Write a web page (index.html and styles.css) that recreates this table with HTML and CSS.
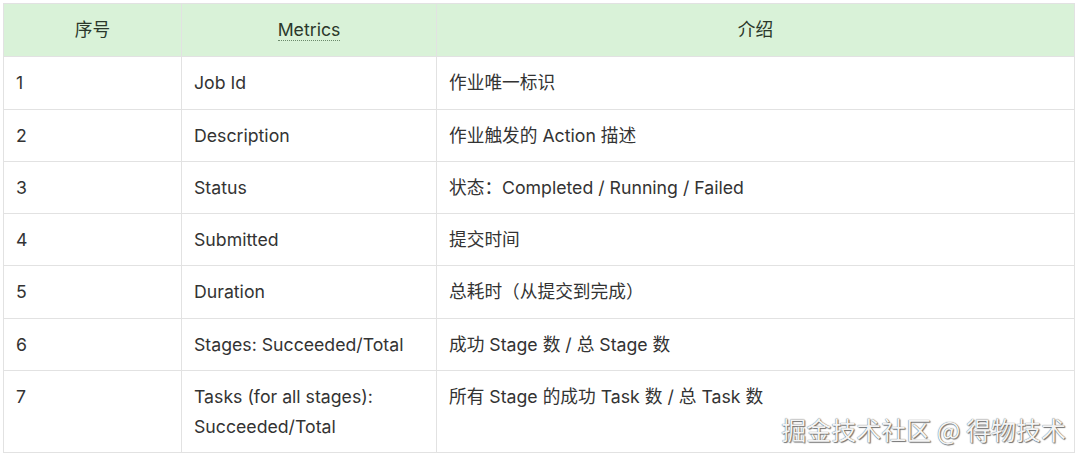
FILE: index.html
```html
<!DOCTYPE html>
<html lang="zh-CN">
<head>
<meta charset="utf-8">
<title>Job Metrics</title>
<link rel="stylesheet" href="styles.css">
</head>
<body>
<div class="wrap">
  <table class="metrics">
    <colgroup>
      <col class="c1"><col class="c2"><col class="c3">
    </colgroup>
    <thead>
      <tr><th>序号</th><th><span class="abbr">Metrics</span></th><th>介绍</th></tr>
    </thead>
    <tbody>
      <tr><td>1</td><td>Job Id</td><td>作业唯一标识</td></tr>
      <tr><td>2</td><td>Description</td><td>作业触发的 Action 描述</td></tr>
      <tr><td>3</td><td>Status</td><td>状态：Completed / Running / Failed</td></tr>
      <tr><td>4</td><td>Submitted</td><td>提交时间</td></tr>
      <tr><td>5</td><td>Duration</td><td>总耗时（从提交到完成）</td></tr>
      <tr><td>6</td><td>Stages: Succeeded/Total</td><td>成功 Stage 数 / 总 Stage 数</td></tr>
      <tr><td>7</td><td>Tasks (for all stages):<br>Succeeded/Total</td><td>所有 Stage 的成功 Task 数 / 总 Task 数</td></tr>
    </tbody>
  </table>
  <div class="watermark">掘金技术社区 @ 得物技术</div>
</div>
</body>
</html>
```

FILE: styles.css
```css
html, body {
  margin: 0;
  padding: 0;
  background: #ffffff;
}
body {
  padding: 3px 6px 0 3px;
  font-family: Inter, "Noto Sans CJK SC", sans-serif;
  color: #333333;
}
.wrap {
  position: relative;
  width: 1071px;
}
.metrics {
  width: 1071px;
  border-collapse: collapse;
  table-layout: fixed;
  font-size: 17.7px;
  line-height: 30px;
}
.c1 { width: 178px; }
.c2 { width: 255px; }
.c3 { width: 638px; }
.metrics th,
.metrics td {
  border: 1px solid #e2e2e2;
  padding: 11px 12px 10.3px;
  vertical-align: top;
  text-align: left;
}
.metrics th {
  background: #d9f2d8;
  font-weight: 400;
  text-align: center;
  color: #2b382b;
  height: 31px;
  padding-top: 11px;
}
.abbr {
  border-bottom: 1px dotted #6b8a6b;
}
.watermark {
  position: absolute;
  right: 8px;
  bottom: 9px;
  font-family: "Noto Sans CJK SC", sans-serif;
  font-size: 25px;
  line-height: 30px;
  color: #f4f4f4;
  text-shadow: 0 0 1px #444, 1px 1px 1px #777;
}
```
